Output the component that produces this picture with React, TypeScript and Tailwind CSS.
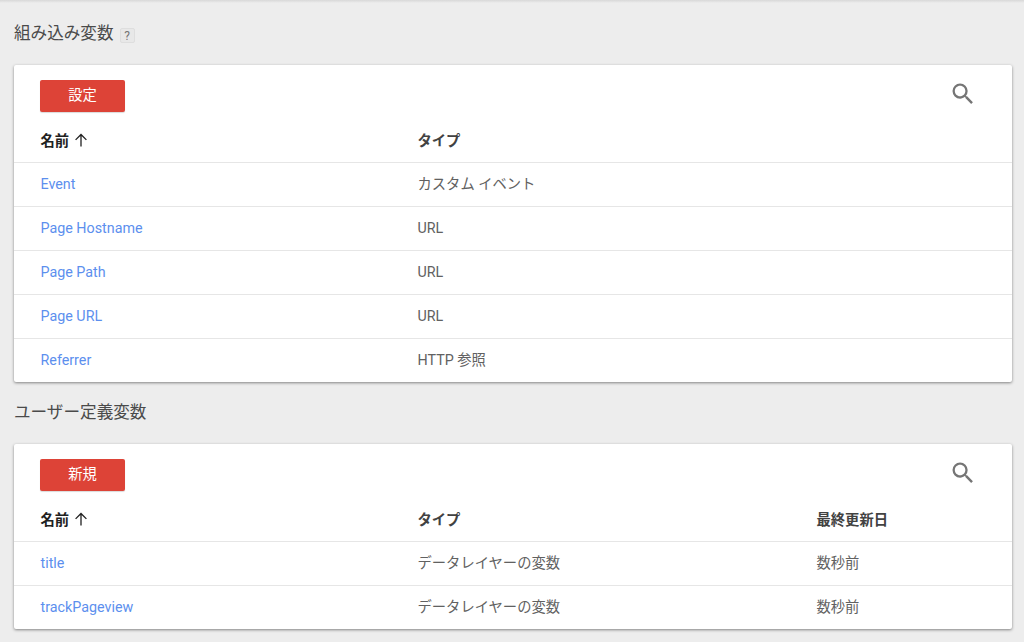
import React from 'react';

const FONT = "font-['Roboto','Noto_Sans_CJK_JP',sans-serif]";

const SearchIcon = () => (
  <svg width="28" height="28" viewBox="0 0 24 24" fill="#757575">
    <path d="M15.5 14h-.79l-.28-.27A6.47 6.47 0 0 0 16 9.5 6.5 6.5 0 1 0 9.5 16c1.61 0 3.09-.59 4.23-1.57l.27.28v.79l5 4.99L20.49 19l-4.99-5zm-6 0C7.01 14 5 11.99 5 9.5S7.01 5 9.5 5 14 7.01 14 9.5 11.99 14 9.5 14z" />
  </svg>
);

const ArrowUp = () => (
  <svg width="14" height="14" viewBox="0 0 14 14" fill="none" stroke="#212121" strokeWidth="1.3" className="ml-[5px] mt-[-4px]">
    <path d="M7 13.5V1.5M1.6 6.9 7 1.5l5.4 5.4" />
  </svg>
);

type Row = { name: string; type: string; updated?: string };

const builtIn: Row[] = [
  { name: 'Event', type: 'カスタム イベント' },
  { name: 'Page Hostname', type: 'URL' },
  { name: 'Page Path', type: 'URL' },
  { name: 'Page URL', type: 'URL' },
  { name: 'Referrer', type: 'HTTP 参照' },
];

const userDefined: Row[] = [
  { name: 'title', type: 'データレイヤーの変数', updated: '数秒前' },
  { name: 'trackPageview', type: 'データレイヤーの変数', updated: '数秒前' },
];

const VariableTable = ({ action, rows, showUpdated }: { action: string; rows: Row[]; showUpdated?: boolean }) => (
  <div className="bg-white rounded-[2px] shadow-[0_1px_3px_rgba(0,0,0,0.45)]">
    <div className="flex items-start justify-between pl-[26px] pr-[35px] pt-[15px]">
      <button className="w-[85px] h-[32px] bg-[#dd4337] text-white text-[14.3px] rounded-[2px] shadow-[0_1px_1px_rgba(0,0,0,0.15)]">
        {action}
      </button>
      <div>
        <SearchIcon />
      </div>
    </div>
    <div className="grid grid-cols-[377px_399px_1fr] pl-[26.5px] h-[51px] items-center text-[14.3px] font-bold text-[#212121] border-b border-[#e6e6e6] pt-[10px]">
      <div className="flex items-center">
        名前
        <ArrowUp />
      </div>
      <div className="text-[#424242]">タイプ</div>
      {showUpdated && <div className="text-[#424242]">最終更新日</div>}
    </div>
    {rows.map((row, i) => (
      <div
        key={row.name}
        className={`grid grid-cols-[377px_399px_1fr] pl-[26.5px] items-center text-[14.3px] ${i < rows.length - 1 ? 'h-[44px] border-b border-[#e6e6e6]' : 'h-[43px]'}`}
      >
        <a className="text-[#5c8fee]">{row.name}</a>
        <div className="text-[#616161]">{row.type}</div>
        {row.updated && <div className="text-[#616161]">{row.updated}</div>}
      </div>
    ))}
  </div>
);

export default function App() {
  return (
    <div className={`${FONT} w-[1024px] h-[642px] overflow-hidden bg-[#ededed]`}>
      <div className="h-[3px] bg-gradient-to-b from-[#d8d8d8] to-[#ededed]" />
      <div className="pl-[14px] pr-[12px]">
        <div className="flex items-center h-[62px]">
          <h2 className="text-[16.6px] text-[#4a4a4a] font-normal">組み込み変数</h2>
          <span className="ml-[6px] mt-[3px] w-[15px] h-[15px] flex items-center justify-center bg-[#e8e8e8] border border-[#dedede] rounded-[2px] text-[12px] text-[#757575]">
            ?
          </span>
        </div>
        <VariableTable action="設定" rows={builtIn} />
        <h2 className="h-[62px] flex items-center text-[16.6px] text-[#4a4a4a] font-normal">ユーザー定義変数</h2>
        <VariableTable action="新規" rows={userDefined} showUpdated />
      </div>
    </div>
  );
}
